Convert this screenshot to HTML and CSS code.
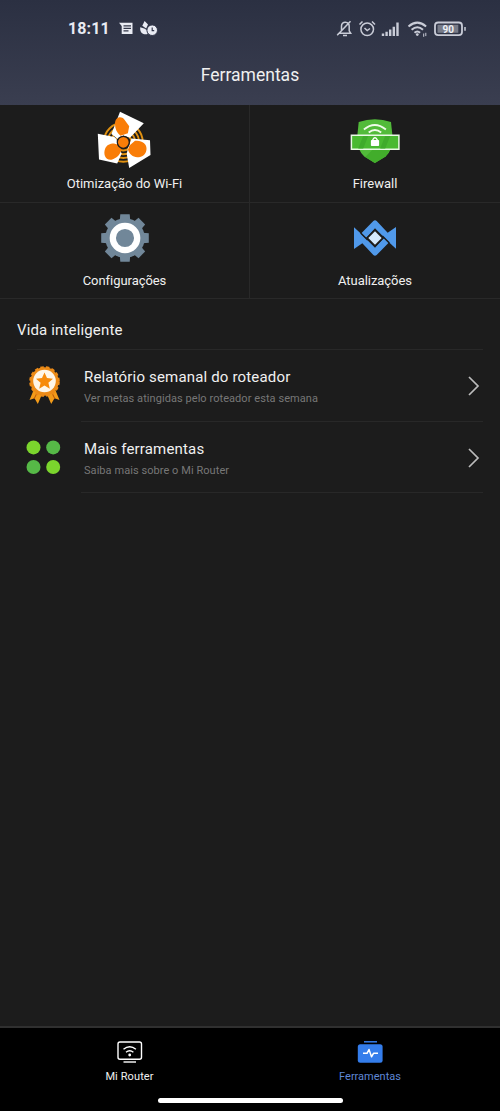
FILE: index.html
```html
<!DOCTYPE html>
<html lang="pt-BR">
<head>
<meta charset="utf-8">
<title>Ferramentas</title>
<link rel="stylesheet" href="styles.css">
</head>
<body>
<div class="phone">
  <header class="header">
    <div class="status">
      <div class="status-left">
        <span class="clock">18:11</span>
        <svg width="14" height="14" viewBox="0 0 14 14"><path fill="#e9ebf3" d="M0 .8h13.5V12H2.7V4z"/><path stroke="#333748" stroke-width="1.2" d="M4.5 3.9H12M4.5 6.4H12M4.5 8.9h5"/></svg>
        <svg class="activity" width="18" height="15" viewBox="0 0 18 15"><g fill="#e9ebf3"><path d="M4.6 0 8 3.5 6.2 7.6 2.3 4.8zM.2 6.2l4 1.2 3.4 2V13C3.3 13.8.3 11.8.2 8.2z"/><circle cx="12.2" cy="9.2" r="5.3" stroke="#31364a"/></g><path d="M12.2 6.6v3h2" fill="none" stroke="#31364a" stroke-width="1.2"/></svg>
      </div>
      <div class="status-right">
        <svg width="130" height="20" viewBox="336 18 130 20" fill="none" stroke="#c9ccd7" stroke-width="1.5">
          <path d="M339 32.3h11.7l-1.500-2.500v-4.500c0-5-7.700-5.600-7.700-.2v4.700zM343 34.500h4M337.200 34.300 350.500 20.200"/>
          <circle cx="367.2" cy="28.3" r="6.300"/><path d="m364.500 27 2.700 2.500 2.800-2M359.500 23.500l3-3M375 23.500l-3-3"/>
          <path stroke-width="2.4" d="M383 35v-2.500M386.600 35v-4.200M390.200 35v-6.500M393.800 35v-9.300M397.500 35V21.500"/>
          <path stroke-width="2" d="M408.500 25.500q8.800-7.800 17.600 0M411.600 28.800q5.700-5.200 11.400 0M414.500 31.700q2.800-2.500 5.600 0"/><circle cx="417.300" cy="33.600" r="1.400" fill="#c9ccd7" stroke="none"/><path stroke-width="1" d="M423.700 32.500v3.300M425.800 31.800v3.300"/>
          <rect x="435" y="21.500" width="27" height="12.600" rx="3.200" stroke-width="1.800"/><path fill="#777b88" stroke="none" d="M437.500 23.800h20.800v8h-20.800z"/><path d="M465 26v3.800"/>
          <text x="448.3" y="31.8" class="charge">90</text>
        </svg>
      </div>
    </div>
    <h1 class="title">Ferramentas</h1>
  </header>

  <main class="main">
    <section class="grid">
      <div class="tile">
        <svg width="60" height="60" viewBox="94.500 110 60 60">
          <g fill="none" stroke="#e09010" stroke-width="1.900"><circle cx="122.800" cy="142.300" r="19.500"/><circle cx="122.800" cy="142.300" r="15.700"/><circle cx="122.800" cy="142.300" r="11.900"/><circle cx="122.800" cy="142.300" r="8.200"/></g>
          <g fill="#fff"><path d="M119.500 111.700 143.300 123.300 129.500 137.700 122.800 135.500 117.300 139 110.900 134zM97.300 133.700 114 137 116.200 139.500 117.500 145.500 121.200 153.500 116.700 163.500 98.500 159.500zM131 138.500 149.500 140.300 150 155 128.700 168 126.200 154 127.500 148z"/></g>
          <g fill="#f97d08"><path d="M114.500 124c0-7 6-8.500 9.500-4.300l4.700 6.600-1.300 7-7.400 2.500c-3.800-3-5.500-7.400-5.500-11.800zM113.500 143.500l5.200 1.500 2.200 4.200c-.8 5-4.200 8.800-10 10.500-6.500.6-8.300-6-6.200-11.200 1.700-3.600 4.500-5 8.800-5zM134.500 140.800c5.500 0 11 1.500 11.500 7.200.4 6-4 9.300-9.300 9.300-4.500-.4-7.700-3.300-9.300-7.600l1.600-4.200z"/></g>
          <circle cx="122.800" cy="142.300" r="6" fill="#f97d08" stroke="#1c1c1c" stroke-width="1.300"/>
        </svg>
        <span class="tile-label wifi">Otimização do Wi-Fi</span>
      </div>
      <div class="tile">
        <svg width="60" height="60" viewBox="344.800 110 60 60">
          <path fill="#52bb3a" d="M358.500 122q16.200-5.500 32.300 0l1.700 16q-.5 13-7.200 18.500l-10.600 6.500-10.600-6.500q-6.700-5.500-7.200-18.500z"/>
          <path fill="#42ad2b" d="m365 157 22-22h5q0 14-6.500 21.500L374.700 163z"/>
          <path fill="none" stroke="#effbea" stroke-width="1.800" d="M363.700 129.500q10.800-9 22 0M368.500 132.500q6.200-5 12.500 0"/>
          <path fill="#49b931" stroke="#e9fae5" stroke-width="1.500" d="M351.200 135.300h47.500v14h-47.500z"/>
          <path fill="#3fab2b" d="m358 148.500 5-12.500h5l-5 12.500zm22 0 5-12.500h5l-5 12.500z"/>
          <rect x="370.700" y="140" width="8.200" height="6" rx=".8" fill="#fff"/><path d="M372.700 140.500v-1q2-3.500 4.200 0v1" fill="none" stroke="#fff" stroke-width="1.400"/>
        </svg>
        <span class="tile-label firewall">Firewall</span>
      </div>
      <div class="tile">
        <svg width="60" height="60" viewBox="-30 -31 60 60">
          <g fill="#718799"><circle r="19.800"/><path id="teeth" d="M-5.200-18-4.700-23.800h9.400l.5 5.800v36l-.5 5.800h-9.400l-.5-5.800z"/><use href="#teeth" transform="rotate(45)"/><use href="#teeth" transform="rotate(90)"/><use href="#teeth" transform="rotate(135)"/></g>
          <circle r="12.200" fill="#718799" stroke="#fff" stroke-width="6.300"/>
        </svg>
        <span class="tile-label config">Configurações</span>
      </div>
      <div class="tile">
        <svg width="60" height="60" viewBox="-90 -93 180 180">
          <path id="wing" fill="#5099ea" d="m-41-14 36-37q5-4 10 0l33 35 25-17v65L45 16 0-29-27 0z"/>
          <use href="#wing" transform="rotate(180)"/>
          <path stroke="#1c1c1c" stroke-width="4.500" d="M-43-15-22 6M43 15 22-6"/>
          <path fill="#1c1c1c" d="m0-27 27 27L0 27-27 0z"/>
          <path fill="#d4e8fc" d="m0-20 20 20L0 20-20 0z"/>
        </svg>
        <span class="tile-label updates">Atualizações</span>
      </div>
    </section>

    <section class="smart">
      <h2 class="section-title">Vida inteligente</h2>
      <div class="item">
        <svg class="item-icon" width="40" height="44" viewBox="23.500 363 40 44">
          <path fill="#f39b19" d="m34 388-5 12 5-1.700 3.300 5.700 5-11.500zM54 388l5 12-5-1.700-3.300 5.700-5-11.500z"/>
          <path stroke="#b85408" d="m33.500 399 3-6M54.500 399l-3-6"/>
          <circle cx="44" cy="381.500" r="14.200" fill="#ed8b17"/><circle cx="44" cy="381.500" r="14.300" fill="none" stroke="#ed8b17" stroke-width="2" stroke-dasharray="3.500 2.200"/>
          <circle cx="44" cy="381" r="11.300" fill="#fff6e7"/>
          <path fill="#f78b0a" d="m44 372.500 2.500 5.600 6 .6-4.600 4 1.400 6-5.300-3.100-5.300 3.100 1.400-6-4.600-4 6-.6z"/>
        </svg>
        <div class="item-body">
          <div><div class="item-title report">Relatório semanal do roteador</div><div class="item-sub report-sub">Ver metas atingidas pelo roteador esta semana</div></div>
          <svg class="chevron" width="14" height="22" viewBox="0 0 14 22"><path d="m2 2 9 9-9 9"/></svg>
        </div>
      </div>
      <div class="item">
        <svg class="item-icon" width="40" height="44" viewBox="0 0 40 44"><g fill="#7bd52d"><circle cx="9.500" cy="12.400" r="7"/><circle cx="29.200" cy="32" r="7"/></g><g fill="#56b947"><circle cx="29.200" cy="12.400" r="7"/><circle cx="9.500" cy="32" r="7"/></g></svg>
        <div class="item-body">
          <div><div class="item-title more">Mais ferramentas</div><div class="item-sub more-sub">Saiba mais sobre o Mi Router</div></div>
          <svg class="chevron" width="14" height="22" viewBox="0 0 14 22"><path d="m2 2 9 9-9 9"/></svg>
        </div>
      </div>
    </section>
  </main>

  <nav class="nav">
    <div class="tabs">
      <div class="tab router">
        <svg width="28" height="24" viewBox="0 0 28 24" fill="none" stroke="#fff" stroke-width="1.400"><rect x="2" y="2" width="23.500" height="17.300" rx="2"/><path d="M7.500 22h12.500"/><path d="M7.500 9.200q6.200-5 12.400 0M10 12.200q3.700-3 7.400 0"/><circle cx="13.700" cy="15" r="1.400" fill="#fff" stroke="none"/></svg>
        <span>Mi Router</span>
      </div>
      <div class="tab active">
        <svg width="28" height="24" viewBox="0 0 28 24"><path stroke="#347deb" stroke-width="1.500" d="M8 1.800h13"/><rect x="1.800" y="4.300" width="24.800" height="18.500" rx="2.500" fill="#347deb"/><path fill="none" stroke="#fff" stroke-width="1.500" stroke-linejoin="round" d="M7 13.300h4l2-3.800 2.500 7.300 2-3.500H22"/></svg>
        <span>Ferramentas</span>
      </div>
    </div>
    <div class="home-bar"></div>
  </nav>
</div>
</body>
</html>
```
FILE: styles.css
```css
* { box-sizing: border-box; }
body { margin: 0; background: #1c1c1c; color: #f0f0f0; font-family: Roboto, sans-serif; }
svg { display: block; flex: none; }
.phone { height: 1111px; display: flex; flex-direction: column; }
.header { height: 105px; background: linear-gradient(#2b3042, #3a3e50); }
.status { height: 57px; padding: 0 34px 0 68px; display: flex; align-items: center; justify-content: space-between; }
.status-left { display: flex; align-items: center; }
.clock { width: 51px; font-size: 16px; line-height: 20px; font-weight: 700; letter-spacing: .1px; color: #e9ebf3; }
.activity { margin-left: 7px; }
.charge { font-size: 10px; font-weight: 700; text-anchor: middle; fill: #eef0f6; stroke: none; }
.title { margin: 6px 0 0; text-align: center; font-size: 17.500px; line-height: 24px; font-weight: 400; letter-spacing: 0; }
.main { flex: 1; }
.grid { display: grid; grid-template-columns: 250px 250px; grid-template-rows: 98px 96px; }
.tile { display: flex; flex-direction: column; align-items: center; border-bottom: 1px solid #292929; }
.tile:nth-child(odd) { border-right: 1px solid #292929; }
.tile:nth-child(-n+2) { padding-top: 5px; }
.tile:nth-child(n+3) { padding-top: 4px; }
.tile-label { margin-top: 5px; font-size: 13px; line-height: 18px; }
.config, .updates { letter-spacing: -.05px; }
.smart { padding: 0 17px; }
.section-title { margin: 0; height: 51px; padding-top: 20px; font-size: 15px; line-height: 23px; font-weight: 400; letter-spacing: .15px; border-bottom: 1px solid #282828; }
.item { display: flex; height: 71.500px; }
.item-icon { margin: 13px 0 0 7px; }
.item-body { flex: 1; display: flex; justify-content: space-between; margin-left: 17px; padding: 16px 2px 0 3px; border-bottom: 1px solid #282828; }
.item-title { font-size: 15px; line-height: 23px; letter-spacing: .17px; }
.item-sub { font-size: 11px; line-height: 20px; color: #777; letter-spacing: .06px; }
.chevron { margin-top: 9px; fill: none; stroke: #bcbcbc; stroke-width: 1.700; }
.nav { height: 85px; background: #000; border-top: 2px solid #303030; }
.tabs { display: flex; justify-content: space-between; padding: 12px 80px 0; }
.tab { width: 100px; display: flex; flex-direction: column; align-items: center; font-size: 11px; line-height: 17px; gap: 4px; }
.router { width: 99px; letter-spacing: .1px; }
.active { color: #5f87d5; }
.home-bar { width: 185px; height: 5px; margin: 13px auto 0; border-radius: 3px; background: #fff; }
```
